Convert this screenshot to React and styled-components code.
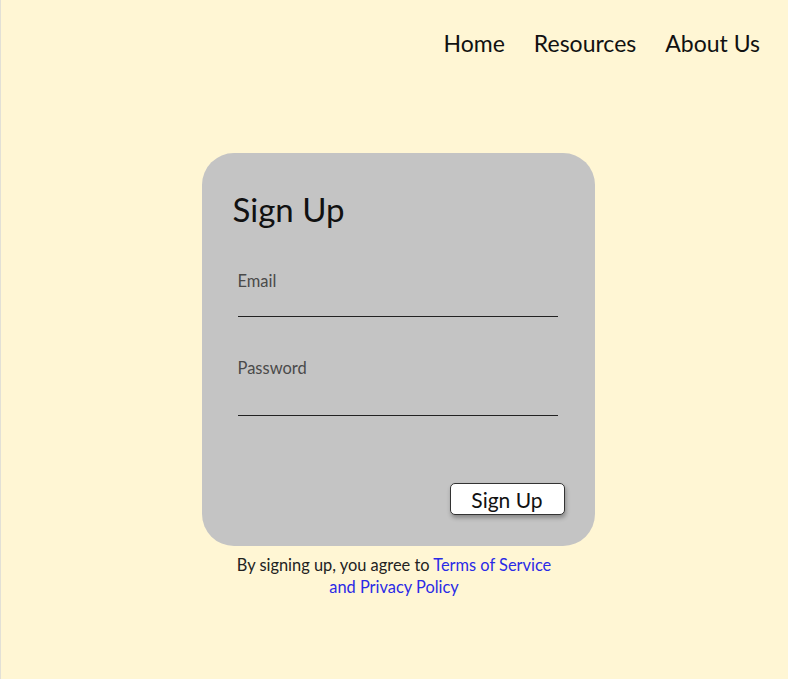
import React from 'react';
import styled, {createGlobalStyle} from 'styled-components';

const GlobalStyle = createGlobalStyle`
  body {
    margin: 0;
    background: #FFF6D4;
    font-family: Lato, "Open Sans", sans-serif;
  }
`;

const Page = styled.div`
  min-height: 679px;
  box-sizing: border-box;
  border-left: 1px solid #e2e0d6;
  background: #FFF6D4;
  display: flex;
  flex-direction: column;
`;

const Nav = styled.nav`
  display: flex;
  justify-content: flex-end;
  gap: 29px;
  padding: 28px 28px 0 0;
`;

const NavLink = styled.a`
  font-size: 23px;
  line-height: 30px;
  color: #111;
  text-decoration: none;
`;

const Main = styled.main`
  display: flex;
  flex-direction: column;
  align-items: center;
  padding: 95px 0 0 7px;
`;

const Card = styled.form`
  width: 393px;
  height: 393px;
  box-sizing: border-box;
  background: #C4C4C4;
  border-radius: 32px;
  padding: 36px 37px 31px 31px;
  display: flex;
  flex-direction: column;
`;

const Title = styled.h1`
  margin: 0 0 42px;
  font-size: 33px;
  font-weight: 400;
  line-height: 40px;
  color: #111;
`;

const Field = styled.label`
  display: flex;
  flex-direction: column;
  margin: 0 0 41px 5px;
`;

const Label = styled.span`
  font-size: 16.5px;
  line-height: 20px;
  color: #4a4a4a;
`;

const Input = styled.input`
  border: none;
  border-bottom: 1.5px solid #222;
  background: transparent;
  height: ${({tall}) => (tall ? '37px' : '25px')};
  outline: none;
  padding: 0;
`;

const Actions = styled.div`
  margin-top: auto;
  display: flex;
  justify-content: flex-end;
  margin-right: -7px;
`;

const Button = styled.button`
  width: 115px;
  height: 32px;
  background: #fff;
  border: 1.5px solid #333;
  border-radius: 5px;
  box-shadow: 1px 3px 4px rgba(0, 0, 0, 0.3);
  font-family: inherit;
  font-size: 21px;
  color: #111;
  padding: 0;
`;

const Terms = styled.p`
  margin: 8px 8px 0 0;
  width: 340px;
  text-align: center;
  font-size: 16.4px;
  line-height: 22px;
  color: #222;
  a {
    color: #2a2ae6;
    text-decoration: none;
  }
`;

export default function App() {
  return (
    <Page>
      <GlobalStyle />
      <Nav>
        <NavLink href="#">Home</NavLink>
        <NavLink href="#">Resources</NavLink>
        <NavLink href="#">About Us</NavLink>
      </Nav>
      <Main>
        <Card onSubmit={(e) => e.preventDefault()}>
          <Title>Sign Up</Title>
          <Field>
            <Label>Email</Label>
            <Input type="email" />
          </Field>
          <Field>
            <Label>Password</Label>
            <Input type="password" tall />
          </Field>
          <Actions>
            <Button type="submit">Sign Up</Button>
          </Actions>
        </Card>
        <Terms>
          By signing up, you agree to <a href="#">Terms of Service</a>
          <br />
          <a href="#">and Privacy Policy</a>
        </Terms>
      </Main>
    </Page>
  );
}
